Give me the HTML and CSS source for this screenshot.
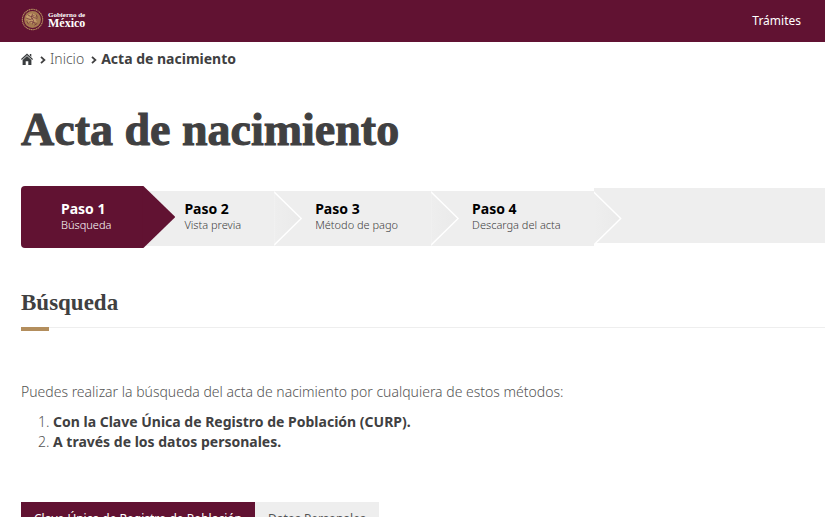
FILE: index.html
```html
<!DOCTYPE html>

<html lang="es">
    <head>
        <meta charset="utf-8">
        <title>Acta de nacimiento</title>
        <meta name="viewport" content="width=device-width, initial-scale=1">
        <link rel="stylesheet" href="styles.css">
    </head>

    <body>
        <header class="topbar">
            <a class="brand" href="#">
                <svg class="seal" viewBox="0 0 24 24" aria-hidden="true">
                    <circle cx="12" cy="12" r="10.6" fill="none" stroke="#b38e5d" stroke-width="1.2" stroke-dasharray="1.4 .5"/>
                    <circle cx="12" cy="12" r="8.8" fill="#a57a50"/>
                    <path d="M5 9c2-3 5-4 8-3l3 2-2 1 3 2-2 1 2 3-3-1-1 3-3-2-3 1 1-3-3-1 2-1z" fill="#c59c6c"/>
                    <path d="M7 7l3 2 4-1M6 11l4 1 3-2 4 1M8 15l3-1 4 2M12 6l-1 4 2 3-1 4M16 7l1 3M6 14l2 3M14 18l3-2" fill="none" stroke="#6d3038" stroke-width=".8"/>
                </svg>
                <span class="brand-name">
                    <span class="brand-top">Gobierno de</span>
                    <span class="brand-bottom">México</span>
                </span>
            </a>
            <a class="topbar-link" href="#">Trámites</a>
        </header>

        <main class="container">
            <nav class="breadcrumb" aria-label="Ruta">
                <a class="home" href="#" aria-label="Portada">
                    <svg viewBox="0 0 12 12">
                        <path d="M6 .4L12 6l-.8.9L6 2.200.8 6.900 0 6z" fill="#393c3e"/>
                        <path d="M8.800 1h1.500v3l-1.500-1.400zM6 3l4.400 4v5H7.300V8.200H4.700V12H1.600V7z" fill="#393c3e"/>
                    </svg>
                </a>
                <svg class="chevron" viewBox="0 0 6 8"><path d="M1 .8L4.400 4 1 7.200"/></svg>
                <a class="crumb" href="#">Inicio</a>
                <svg class="chevron" viewBox="0 0 6 8"><path d="M1 .8L4.400 4 1 7.200"/></svg>
                <strong>Acta de nacimiento</strong>
            </nav>

            <h1>Acta de nacimiento</h1>

            <ol class="steps">
                <li class="step active"><strong>Paso 1</strong><span>Búsqueda</span></li>
                <li class="step"><strong>Paso 2</strong><span>Vista previa</span></li>
                <li class="step"><strong>Paso 3</strong><span>Método de pago</span></li>
                <li class="step"><strong>Paso 4</strong><span>Descarga del acta</span></li>
            </ol>

            <h2>Búsqueda</h2>

            <p class="intro">Puedes realizar la búsqueda del acta de nacimiento por cualquiera de estos métodos:</p>
            <ol class="methods">
                <li><strong>Con la Clave Única de Registro de Población (CURP).</strong></li>
                <li><strong>A través de los datos personales.</strong></li>
            </ol>

            <div class="tabs" role="tablist">
                <button class="tab selected" type="button" role="tab" aria-selected="true">Clave Única de Registro de Población</button>
                <button class="tab" type="button" role="tab" aria-selected="false">Datos Personales</button>
            </div>
        </main>
    </body>
</html>
```

FILE: styles.css
```css
* {
    box-sizing: border-box;
}

body {
    margin: 0;
    background: #fff;
    color: #545454;
    font-family: "Noto Sans", "Open Sans", sans-serif;
    font-size: 14px;
    font-weight: 300;
    line-height: 20px;
}

a {
    color: inherit;
    text-decoration: none;
}

strong {
    font-weight: 700;
    color: #404041;
}

.topbar {
    display: flex;
    align-items: center;
    justify-content: space-between;
    height: 42px;
    padding: 0 24px 0 21px;
    background: #611232;
    color: #fff;
}

.brand {
    display: flex;
    align-items: center;
    gap: 4px;
    padding-bottom: 4px;
}

.seal {
    width: 23px;
    height: 23px;
}

.brand-name {
    display: flex;
    flex-direction: column;
    font-family: "Liberation Serif", serif;
    font-weight: 700;
}

.brand-top {
    font-size: 7px;
    line-height: 7px;
}

.brand-bottom {
    font-size: 12px;
    line-height: 8px;
}

.topbar-link {
    font-size: 12px;
    font-weight: 400;
}

.container {
    padding-left: 21px;
}

.breadcrumb {
    display: flex;
    align-items: center;
    padding-top: 7px;
}

.breadcrumb svg {
    display: block;
}

.home svg {
    width: 12px;
    height: 12px;
}

.chevron {
    width: 6px;
    height: 8px;
    margin: 2px 4px 0 7px;
    fill: none;
    stroke: #404041;
    stroke-width: 1.8;
}

h1, h2 {
    margin: 0;
    color: #404041;
    font-family: "Liberation Serif", serif;
    font-weight: 700;
}

h1 {
    padding-top: 36px;
    font-size: 46px;
    line-height: 50px;
    -webkit-text-stroke: 1px #404041;
}

/* progress arrows */
.steps {
    display: flex;
    align-items: center;
    margin: 31px 0 0;
    padding: 0;
    list-style: none;
}

.steps::after {
    content: "";
    flex: 1;
    height: 55px;
    margin-bottom: 3px;
    background: #eee;
}

.step {
    position: relative;
    display: flex;
    flex-direction: column;
    justify-content: center;
    height: 55px;
    margin-top: 3px;
    padding: 0 33px 3px 41px;
    background: #eee;
    color: #404041;
    font-size: 11px;
    line-height: 16px;
    white-space: nowrap;
}

.step strong {
    color: #000;
    font-size: 14px;
}

.step::before, .step::after {
    content: "";
    position: absolute;
    z-index: 1;
    top: 0;
    left: 100%;
    width: 28px;
    height: 100%;
    background: #fff;
    clip-path: polygon(0 0, 100% 50%, 0 100%);
}

.step::after {
    width: 26px;
    background: linear-gradient(to right, #eee, #eaeaea);
    clip-path: polygon(0 2px, 100% 50%, 0 calc(100% - 2px));
}

.step.active {
    height: 62px;
    margin-top: 0;
    padding: 0 32px 0 40px;
    background: #611232;
    border-radius: 4px 0 0 4px;
    color: #fff;
}

.step.active strong {
    color: #fff;
}

.step.active::before {
    display: none;
}

/* starts inside the box so no seam shows */
.step.active::after {
    left: calc(100% - 1px);
    width: 33px;
    background: #611232;
    clip-path: polygon(0 0, 1px 0, 100% 50%, 1px 100%, 0 100%);
}

h2 {
    position: relative;
    margin-top: 41px;
    padding-bottom: 10px;
    border-bottom: 1px solid #eee;
    font-size: 23px;
    line-height: 28px;
}

h2::after {
    content: "";
    position: absolute;
    bottom: -4px;
    left: 0;
    width: 28px;
    height: 4px;
    background: #b38e5d;
}

.intro {
    margin: 54px 0 10px;
}

.methods {
    margin: 0;
    padding-left: 32px;
}

.tabs {
    display: flex;
    margin-top: 50px;
}

.tab {
    padding: 7px 13px;
    border: 0;
    background: #eee;
    color: #545454;
    font: inherit;
    font-size: 12px;
    font-weight: 400;
}

.tab.selected {
    background: #611232;
    color: #fff;
}
```
